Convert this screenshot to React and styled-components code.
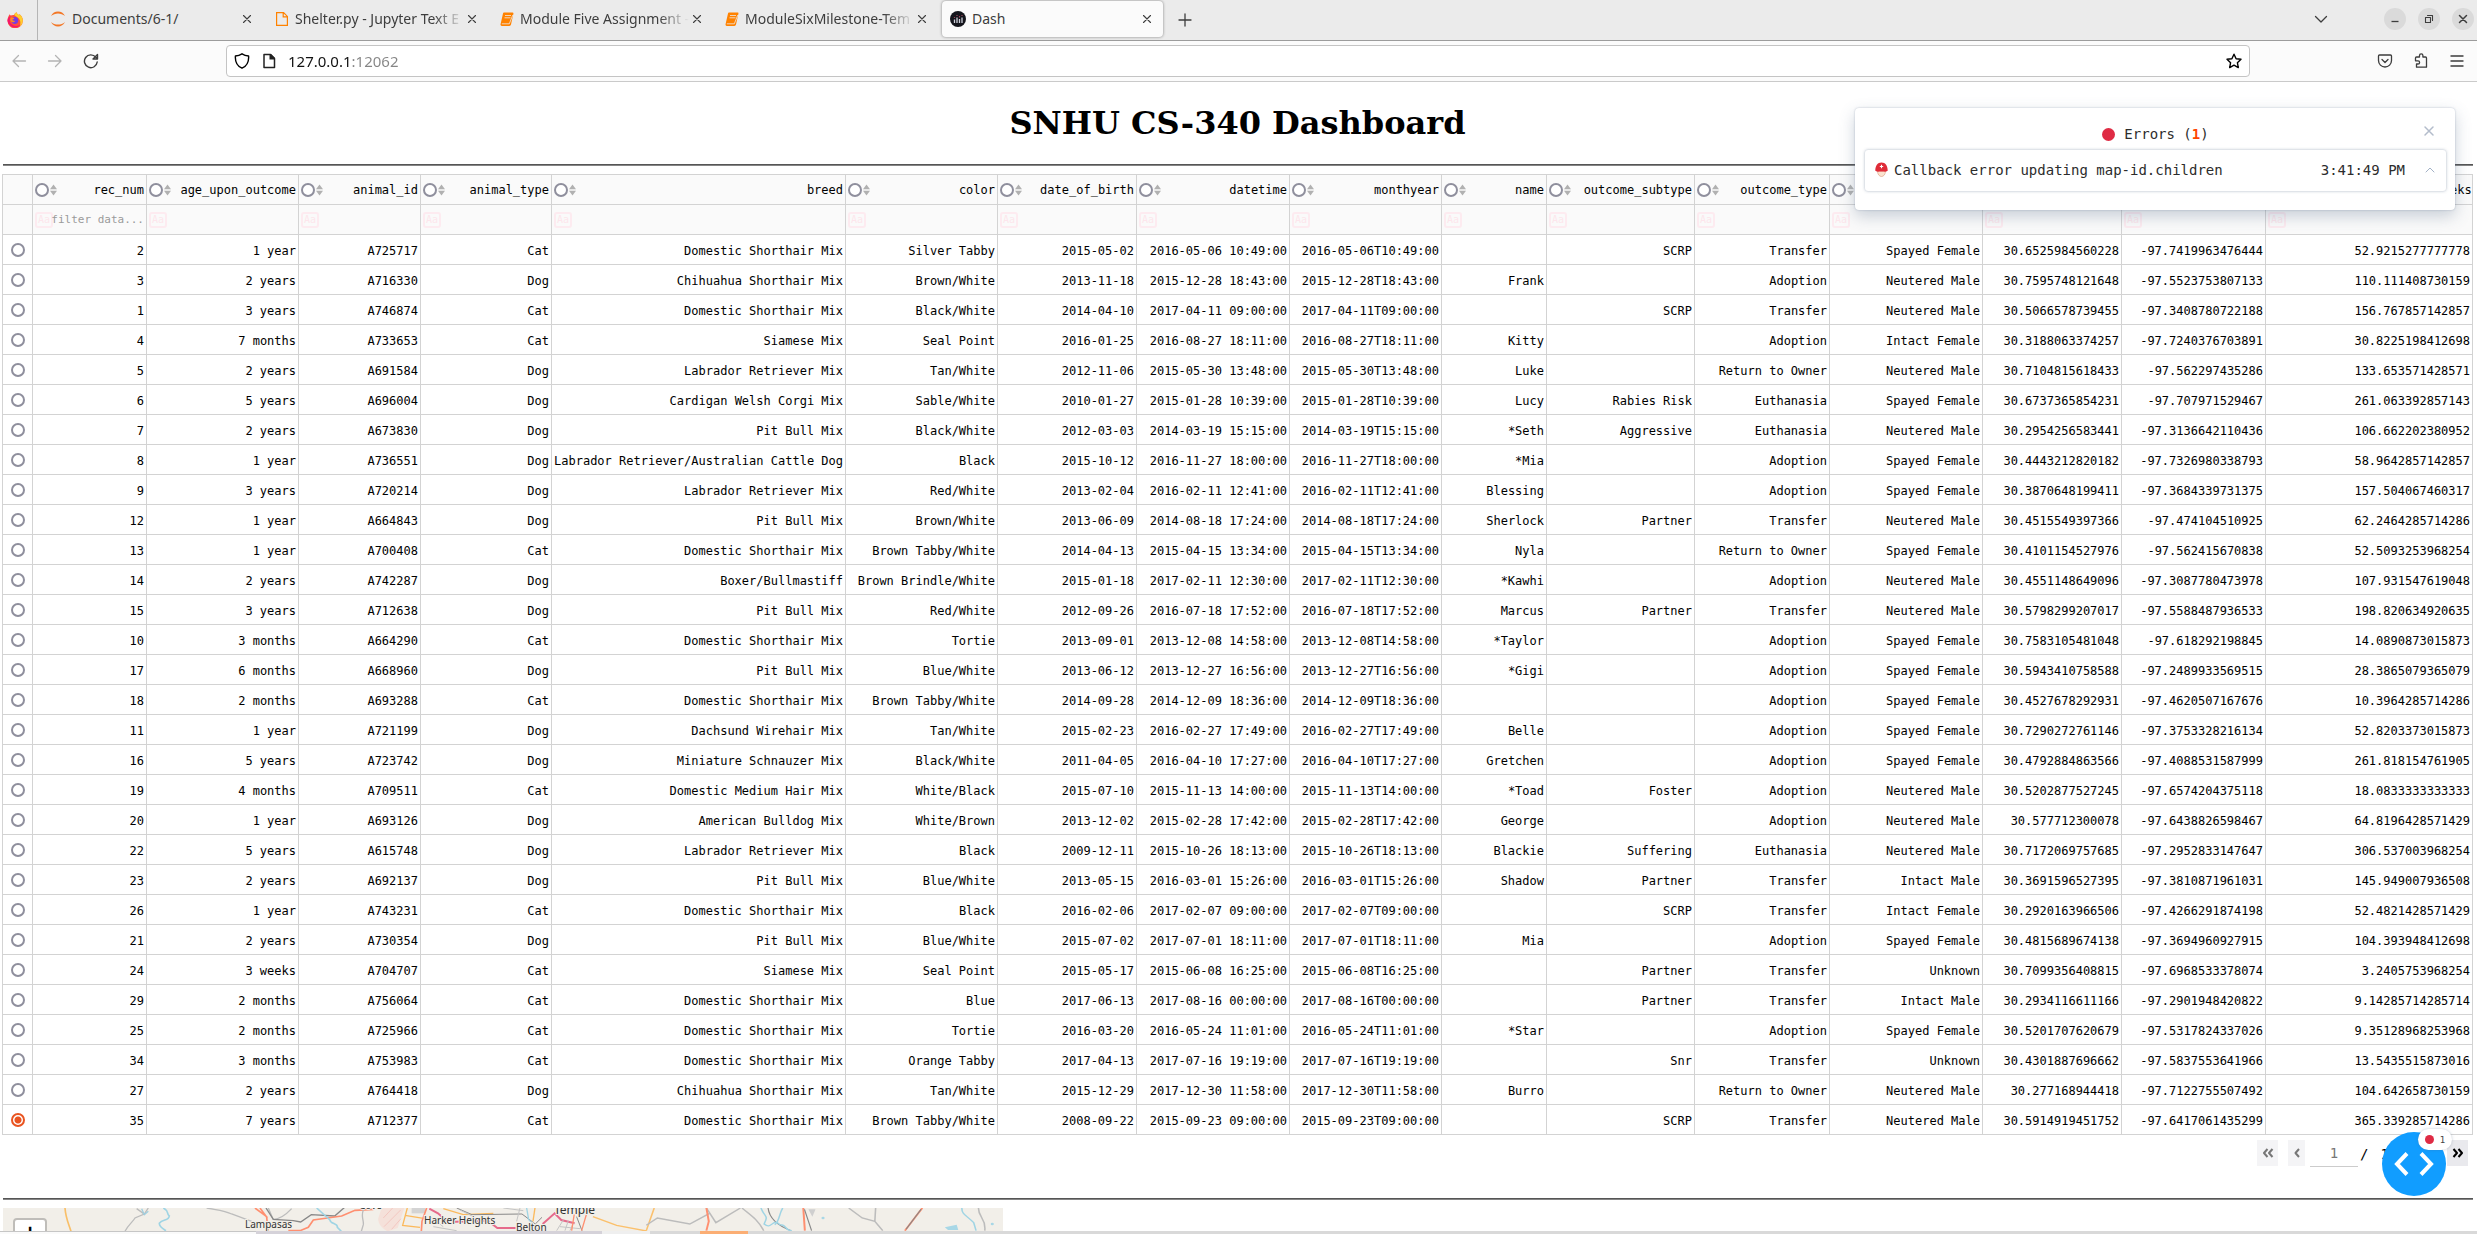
import React, { useState } from "react";
import styled, { createGlobalStyle } from "styled-components";

const UI_FONT = '"Noto Sans", "Open Sans", sans-serif';
const MONO = '"DejaVu Sans Mono", monospace';

const GlobalStyle = createGlobalStyle`
  * { box-sizing: border-box; }
  body { margin: 0; background: #fff; }
  button { border: 0; padding: 0; background: none; font: inherit; color: inherit; cursor: pointer; }
  svg { display: block; flex: none; }
`;

const Window = styled.div`
  display: flex;
  flex-direction: column;
  height: 100vh;
  overflow: hidden;
`;

/* ---------- browser chrome ---------- */

const TabBar = styled.header`
  display: flex;
  flex: none;
  height: 41px;
  background: #ebebeb;
  border-bottom: 1px solid #9c9c9c;
  font: 14px/20px ${UI_FONT};
  color: #3d3d3d;
`;

const Launcher = styled.button`
  display: grid;
  place-items: center;
  width: 38px;
  padding-right: 8px;
  border-right: 1px solid #b5b5b5;
`;

const TabList = styled.nav`
  display: flex;
  align-items: flex-start;
  gap: 4px;
  padding: 1px 4px 0;
`;

const TabBox = styled.div`
  display: flex;
  align-items: center;
  width: 221px;
  height: 36px;
  padding: 0 8px;
  border-radius: 4px;
  background: ${(p) => (p.$active ? "#fbfbfb" : "transparent")};
  box-shadow: ${(p) => (p.$active ? "0 0 3px rgba(0, 0, 0, 0.45)" : "none")};
`;

const TabTitle = styled.a`
  flex: 1;
  min-width: 0;
  margin-left: 6px;
  overflow: hidden;
  white-space: nowrap;
  color: inherit;
  text-decoration: none;
  mask-image: ${(p) => (p.$fade ? "linear-gradient(90deg, #000 82%, transparent)" : "none")};
`;

const IconButton = styled.button`
  display: grid;
  place-items: center;
  width: 16px;
  height: 16px;
  color: ${(p) => p.$color || "#3d3d3d"};
`;

const NewTab = styled(IconButton)`
  align-self: center;
  margin-left: 10px;
`;

const WindowControls = styled.div`
  display: flex;
  align-items: center;
  gap: 12px;
  height: 38px;
  margin-left: auto;
  padding-right: 3px;
`;

const ListTabs = styled(IconButton)`
  margin-right: 43px;
`;

const RoundButton = styled.button`
  display: grid;
  place-items: center;
  width: 22px;
  height: 22px;
  border-radius: 50%;
  background: #dadada;
`;

const Toolbar = styled.div`
  display: flex;
  flex: none;
  align-items: center;
  height: 41px;
  padding: 0 12px 0 11px;
  background: #fbfbfb;
  border-bottom: 1px solid #cacaca;
`;

const ToolGroup = styled.div`
  display: flex;
  gap: 20px;
`;

const AddressBar = styled.label`
  display: flex;
  flex: 1;
  align-items: center;
  gap: 11px;
  height: 32px;
  margin: 0 127px;
  padding: 0 7px;
  border: 1px solid #c4c4c4;
  border-radius: 4px;
  background: #fff;
`;

const AddressInput = styled.input`
  flex: 1;
  min-width: 0;
  border: 0;
  padding: 0;
  outline: 0;
  font: 15px/24px ${UI_FONT};
  color: transparent;
  background: linear-gradient(90deg, #111 63px, #858585 63px);
  background-clip: text;
`;

/* ---------- page ---------- */

const Page = styled.main`
  position: relative;
  flex: 1;
  min-height: 0;
  overflow: hidden;
  padding: 0 4px 0 2px;
`;

const Title = styled.h1`
  margin: 22px 0;
  text-align: center;
  font: bold 32px/38px "DejaVu Serif", serif;
  color: #000;
`;

const Rule = styled.hr`
  height: 2px;
  margin: 0 0 8px 1px;
  border: 0;
  border-top: 1px solid #555;
  background: #858585;
`;

const Table = styled.table`
  width: 100%;
  table-layout: fixed;
  border-collapse: collapse;
  font: 12px/16px ${MONO};
  color: #000;
`;

const Cell = styled.td`
  height: 30px;
  padding: 2px 2px 0;
  border: 1px solid #d3d3d3;
  text-align: right;
  white-space: nowrap;
`;

const HeadCell = styled(Cell)`
  padding-top: 0;
  background: #fafafa;
  font-weight: normal;
`;

const SelectCell = styled(Cell)`
  padding: 0;
`;

const HeadRow = styled.div`
  display: flex;
  align-items: center;
  gap: 1px;
`;

const HeadLabel = styled.label`
  flex: 1;
  padding-top: 1px;
`;

const Radio = styled.input`
  appearance: none;
  display: block;
  flex: none;
  width: 14px;
  height: 14px;
  margin: 0 ${(p) => (p.$centered ? "auto" : 0)};
  border: 2px solid #8f8f9d;
  border-radius: 50%;
  background: #fff;
  &:checked {
    border-color: #e95420;
    background: radial-gradient(circle, #e95420 3px, #fff 4px);
  }
`;

const FilterRow = styled.div`
  display: flex;
  align-items: center;
`;

const CaseButton = styled.button`
  flex: none;
  width: 18px;
  height: 16px;
  border: 2px solid #fdebf0;
  border-radius: 3px;
  font: 10px/12px ${MONO};
  color: #fde6ec;
`;

const FilterInput = styled.input`
  flex: 1;
  width: 0;
  min-width: 0;
  margin-left: -2px;
  border: 0;
  padding: 0;
  outline: 0;
  background: none;
  text-align: right;
  font: 11px/16px ${MONO};
  color: #000;
  &::placeholder { color: #9b9b9b; opacity: 1; }
`;

const Pager = styled.div`
  display: flex;
  align-items: flex-start;
  justify-content: flex-end;
  height: 63px;
  padding: 5px 5px 0 0;
  font: 14px/26px ${MONO};
`;

const PageButton = styled.button`
  display: grid;
  place-items: center;
  width: ${(p) => (p.$narrow ? 17 : 21)}px;
  height: 26px;
  margin-left: ${(p) => p.$gap || 0}px;
  background: ${(p) => (p.$off ? "#f4f4f6" : "#e9e9ed")};
  color: ${(p) => (p.$off ? "#777" : "#000")};
`;

const PageInput = styled.input`
  width: 48px;
  height: 27px;
  margin: 0 2px 0 5px;
  padding: 0;
  border: 0;
  border-bottom: 1px solid #ccc;
  outline: 0;
  text-align: center;
  font: 14px/26px ${MONO};
  background: none;
  &::placeholder { color: #777; opacity: 1; }
`;

const PageCount = styled.span`
  display: flex;
  gap: 12px;
  width: 87px;
  padding-top: 1px;
`;

const MapBox = styled.section`
  position: relative;
  width: 1000px;
  height: 500px;
  margin-left: 1px;
  background: #f2efe9;
`;

const ZoomIn = styled.button`
  position: absolute;
  top: 10px;
  left: 10px;
  width: 34px;
  height: 34px;
  border: 2px solid #bfbdb9;
  border-radius: 4px;
  background: #fff;
  font: bold 22px/30px "Liberation Mono", monospace;
`;

/* ---------- overlays ---------- */

const ErrorCard = styled.aside`
  position: absolute;
  top: 26px;
  right: 22px;
  width: 600px;
  height: 102px;
  padding: 16px 9px 0 10px;
  border-radius: 4px;
  background: #fff;
  box-shadow: 0 0 2px rgba(80, 103, 132, 0.4), 0 6px 16px rgba(80, 103, 132, 0.3);
  font: 14px/20px ${MONO};
  color: #2c2c2c;
`;

const ErrorHead = styled.div`
  display: flex;
  align-items: center;
  justify-content: center;
  gap: 9px;
  height: 20px;
  margin-bottom: 6px;
  b { color: #ff4500; }
`;

const Dot = styled.span`
  width: ${(p) => p.$size}px;
  height: ${(p) => p.$size}px;
  border-radius: 50%;
  background: #df2b44;
`;

const CloseCard = styled(IconButton)`
  position: absolute;
  top: 15px;
  right: 18px;
`;

const ErrorItem = styled.button`
  display: flex;
  align-items: center;
  width: 100%;
  height: 41px;
  padding: 0 8px 2px 10px;
  border-radius: 3px;
  box-shadow: 0 0 3px rgba(80, 103, 132, 0.5);
`;

const ErrorText = styled.span`
  flex: 1;
  margin-left: 6px;
  text-align: left;
`;

const ErrorTime = styled.time`
  margin-right: 17px;
`;

const DevMenu = styled.button`
  position: absolute;
  right: 31px;
  bottom: 35px;
  display: grid;
  place-items: center;
  width: 64px;
  height: 64px;
  border-radius: 50%;
  background: #119dff;
`;

const DevBadge = styled.span`
  position: absolute;
  top: -3px;
  right: -6px;
  display: flex;
  align-items: center;
  justify-content: center;
  gap: 6px;
  width: 34px;
  height: 21px;
  border-radius: 11px;
  background: #fff;
  box-shadow: 0 0 3px rgba(80, 103, 132, 0.35);
  font: 9px/12px ${MONO};
  color: #444;
`;

const Dock = styled.footer`
  display: flex;
  flex: none;
  height: 3px;
  background: #d9d9d9;
`;

const DockItem = styled.span`
  width: ${(p) => p.$width}px;
  background: ${(p) => p.$color};
  border-top: ${(p) => (p.$line ? "1px solid #c6c6c6" : "0")};
`;

/* ---------- icons ---------- */

const Stroke = ({ size = 16, width = 1.3, d, box = "0 0 16 16", cap = "round" }) => (
  <svg width={size} height={size} viewBox={box} fill="none" stroke="currentColor" strokeWidth={width} strokeLinecap={cap} strokeLinejoin="round">
    <path d={d} />
  </svg>
);

const CloseIcon = () => <Stroke d="M4.500 4.500l7 7M11.500 4.500l-7 7" width={1.1} />;

const FirefoxIcon = () => (
  <svg width="16" height="16" viewBox="0 0 16 16">
    <path d="M1.500 4.200C2 3.300 2.400 2.600 2.800 2.200c.1.700.4 1.100.8 1.400C4.800 3 6 2.700 7.200 3 7.500 1.700 8.600.6 9.600.2c.2 1.300 1.200 2.100 2.600 3.100.1-.4.1-.9 0-1.300 2.200 1.500 3.600 3.900 3.600 6.500A7.600 7.600 0 0 1 .5 8.800c-.1-1.700.3-3.300 1-4.600z" fill="#ff4f3a" />
    <path d="M7.200 3C7.500 1.700 8.600.6 9.600.2c.2 1.300 1.200 2.100 2.600 3.100.1-.4.1-.9 0-1.300 2.200 1.500 3.600 3.900 3.600 6.500 0 2.500-1.200 4.700-3.200 6.100 1.500-3.300 1-7.100-2-9.100-1.100-.8-2.300-1.500-3.400-2.500z" fill="#ffcf2e" />
    <path d="M.5 8.800c.6 4 4 6.500 7.500 6.800 2.500 0 4.500-1 5.500-3-2.500 2-7.500 2-10-1.500C2.500 9.500 2.500 6 3.600 3.600 2.200 5 .6 6.500.5 8.800z" fill="#f5156c" />
    <circle cx="7.800" cy="8.500" r="3.400" fill="#7a3be0" />
    <path d="M3.800 5.800c1.200-.5 2.600-.3 3.600.7-.9.6-1.900.8-2.100 1.600.6.9 2 .5 2.700 1.200-.8 1.200-2.800 1.100-4 .1-.8-1-.8-2.500-.2-3.600z" fill="#ff8a1e" />
  </svg>
);

const JupyterIcon = () => (
  <svg width="16" height="16" viewBox="0 0 16 16" fill="#f37726">
    <path d="M1 5C2.500 2 5 .6 8 .6S13.500 2 15 5C13 3.200 10.600 2.400 8 2.400S3 3.200 1 5zM1 11c1.500 3 4 4.400 7 4.400s5.500-1.400 7-4.400c-2 1.800-4.400 2.600-7 2.600S3 12.800 1 11z" />
  </svg>
);

const FileIcon = () => (
  <svg width="14" height="16" viewBox="0 0 14 16" fill="none" stroke="#ff8200" strokeWidth="1.200">
    <path d="M1.600 1.600h7l3.800 3.800v9H1.600zM8.200 1.800v4h4" />
  </svg>
);

const BookIcon = () => (
  <svg width="14" height="16" viewBox="0 0 14 16">
    <path d="M4 1.500h8.500c.8 0 1.100.5.9 1.200L11 13.500c-.2.900-.8 1.400-1.700 1.400H1.800C.8 14.900.3 14 .6 13L3 2.500c.1-.6.4-1 1-1z" fill="#ff8200" />
    <path d="M5 4.500h6M4.500 6.800h6M1.800 12.800h7.500L12.800 4" fill="none" stroke="#ebebeb" strokeWidth=".8" />
  </svg>
);

const DashIcon = () => (
  <svg width="16" height="16" viewBox="0 0 16 16">
    <circle cx="8" cy="8" r="8" fill="#14151c" />
    <path d="M4.500 8.500V12M7 6.500V12M9.500 8V12M12 6.500V12" stroke="#cfd2dc" strokeWidth="1.300" />
    <path d="M4.500 6v1M7 4v1M9.500 5v1.500M12 4v1" stroke="#9c4358" strokeWidth="1.200" />
  </svg>
);

const SortIcon = () => (
  <svg width="7" height="12" viewBox="0 0 7 12" fill="#b1b1b1">
    <path d="M3.500.5L7 5.300H0zM3.500 11.500L0 6.700h7z" />
  </svg>
);

const HelmetIcon = () => (
  <svg width="13" height="15" viewBox="0 0 13 15">
    <path d="M2.500 9h8c0 3.500-2 5.500-4 5.500s-4-2-4-5.500z" fill="#fbe3cf" stroke="#d99a7d" strokeWidth=".6" />
    <path d="M.3 8.800C.3 4 2.500.5 6.500.5s6.200 3.500 6.200 8.300c-1.500.9-3 1-4.200.7h-4c-1.200.3-2.700.2-4.200-.7z" fill="#df2b38" />
    <path d="M6.500 2.800v3.400M4.800 4.500h3.400" stroke="#fff" strokeWidth="1.100" />
  </svg>
);

const MapLines = () => (
  <svg width="1000" height="24" viewBox="0 0 1000 24" fill="none">
    <g transform="translate(-3 -18) scale(.3333)" strokeWidth="4">
      <path d="M195 54c2 30 10 45 18 70" stroke="#f9bf68" strokeWidth="5" />
      <path d="M375 124c10-20 25-30 30-40l28-12 12-18M410 56l20 14" stroke="#bcbcbc" />
      <path d="M425 56l8 18 12-10" stroke="#9fcfe0" />
      <path d="M490 54c20 10 8 18 18 24-2 16-20 8-30 22 0 12 14 18 20 22" stroke="#9fd4e4" strokeWidth="5" />
      <path d="M620 54c30 6 55 8 75 18l60 22" stroke="#bcbcbc" />
      <path d="M765 54l35 26 4 42M780 54l22 30" stroke="#ff8f70" strokeWidth="5" />
      <path d="M805 54l15 35M820 88c20 0 40-16 55-32" stroke="#bcbcbc" />
    </g>
    <g transform="translate(227 -18) scale(.3333)" strokeWidth="4">
      <path d="M108 54l22 34 60 4 22 4 32-22 70 4 30-26" stroke="#888" />
      <path d="M175 122h35l25-10 15-22 85-12 40-17 55-3" stroke="#ff8f70" strokeWidth="5" />
      <path d="M260 54l20 18 20 18c0 12 25 10 22 22l12 12" stroke="#9fd4e4" strokeWidth="5" />
      <path d="M400 60c-8 20 2 30 0 44l-6 20" stroke="#bcbcbc" />
      <path d="M455 54h68l-20 60-30 10c-20-10-30-26-28-40z" fill="#f5e1da" />
      <path d="M460 84l28-30M462 110l50-50M485 118l28-32" stroke="#f2bab4" strokeWidth="2" />
      <path d="M545 54h40v16h-40z" fill="#d4d4d4" />
      <path d="M532 54l-14 52 52 6M525 76l60 10M640 56l60 18 90-4" stroke="#fbb95c" strokeWidth="4" />
      <path d="M590 54l-14 40-2 30" stroke="#ff8f70" strokeWidth="5" />
      <path d="M598 56l26 14 30 26 120-4 28 22h55M938 102l36-32 20 20 40 10" stroke="#e66a8b" strokeWidth="6" />
      <path d="M680 54l46 20 150-2 40 30 20-20M1040 80l16 42" stroke="#888" strokeWidth="3" />
      <path d="M600 80l40 30M610 110l70 12M690 60l40 20M820 54l60 8M870 54l-10 40M1000 90l-20 32M1015 92l-10 30M990 110l60 6M1030 100l-10 22" stroke="#c4c4c4" strokeWidth="3" />
      <path d="M915 54l-6 40" stroke="#fbb95c" />
      <path d="M890 54l6 34 30 34" stroke="#9fd4e4" />
      <path d="M1075 54l-20 68M1025 122l8-50" stroke="#ff8f70" />
    </g>
    <g transform="translate(497 -28) scale(.3954 .3333)" strokeWidth="4">
      <path d="M235 110l60 26 75 17M390 84l-20 68" stroke="#fbc06c" strokeWidth="4" />
      <path d="M370 136l28-22 82 18 50-32M522 84l24 44 62-44M612 84c20 20 40 34 55 68M882 84l34 30 32 10 20 28M948 124l2-40M1210 84c0 30 20 30 16 68" stroke="#bcbcbc" />
      <path d="M522 84l6 40-6 28M767 84l4 68M1068 84l-44 68" stroke="#ff8f70" strokeWidth="5" />
      <path d="M678 84c4 40 40 60 58 68M770 88l18 64M1065 88l-38 60" stroke="#888" strokeWidth="3" />
      <path d="M660 84c10 30 20 20 8 48 20 20 20-20 40 2 20 0 10 18 30 18M715 84c-10 20-8 40-20 50M1168 84c0 20 10 20 30 44l6 24" stroke="#9fd4e4" strokeWidth="4" />
      <path d="M780 88h18l-8 22z" fill="#cfcfcf" />
      <path d="M1125 142l30-8 4 16h-26z" fill="#a8d7e6" />
      <circle cx="817" cy="114" r="4" fill="#a8d7e6" />
      <circle cx="1245" cy="132" r="4" fill="#a8d7e6" />
    </g>
    <g fill="#333" stroke="#f2efe9" strokeWidth="2" paintOrder="stroke" fontFamily='"Noto Sans", sans-serif' fontSize="10">
      <text x="242" y="20">Lampasas</text>
      <text x="421" y="16">Harker Heights</text>
      <text x="513" y="23">Belton</text>
      <text x="356" y="1">Cove</text>
      <text x="551" y="6" fontSize="12">Temple</text>
    </g>
  </svg>
);

/* ---------- data ---------- */

const TABS = [
  { title: "Documents/6-1/", icon: <JupyterIcon /> },
  { title: "Shelter.py - Jupyter Text E", icon: <FileIcon />, fade: true },
  { title: "Module Five Assignment -", icon: <BookIcon />, fade: true },
  { title: "ModuleSixMilestone-Tem", icon: <BookIcon />, fade: true },
  { title: "Dash", icon: <DashIcon />, active: true },
];

const COLUMNS = [
  ["rec_num", 114],
  ["age_upon_outcome", 152],
  ["animal_id", 122],
  ["animal_type", 131],
  ["breed", 294],
  ["color", 152],
  ["date_of_birth", 139],
  ["datetime", 153],
  ["monthyear", 152],
  ["name", 105],
  ["outcome_subtype", 148],
  ["outcome_type", 135],
  ["sex_upon_outcome", 153],
  ["location_lat", 139],
  ["location_long", 144],
  ["age_upon_outcome_in_weeks", null],
];

// rec | age | id | type | breed | colour | born | outcome time | name | subtype | outcome | sex | lat | long | weeks
const RECORDS = `
2|1 year|A725717|Cat|Domestic Shorthair Mix|Silver Tabby|2015-05-02|2016-05-06 10:49:00||SCRP|Transfer|Spayed Female|30.6525984560228|-97.7419963476444|52.9215277777778
3|2 years|A716330|Dog|Chihuahua Shorthair Mix|Brown/White|2013-11-18|2015-12-28 18:43:00|Frank||Adoption|Neutered Male|30.7595748121648|-97.5523753807133|110.111408730159
1|3 years|A746874|Cat|Domestic Shorthair Mix|Black/White|2014-04-10|2017-04-11 09:00:00||SCRP|Transfer|Neutered Male|30.5066578739455|-97.3408780722188|156.767857142857
4|7 months|A733653|Cat|Siamese Mix|Seal Point|2016-01-25|2016-08-27 18:11:00|Kitty||Adoption|Intact Female|30.3188063374257|-97.7240376703891|30.8225198412698
5|2 years|A691584|Dog|Labrador Retriever Mix|Tan/White|2012-11-06|2015-05-30 13:48:00|Luke||Return to Owner|Neutered Male|30.7104815618433|-97.562297435286|133.653571428571
6|5 years|A696004|Dog|Cardigan Welsh Corgi Mix|Sable/White|2010-01-27|2015-01-28 10:39:00|Lucy|Rabies Risk|Euthanasia|Spayed Female|30.6737365854231|-97.707971529467|261.063392857143
7|2 years|A673830|Dog|Pit Bull Mix|Black/White|2012-03-03|2014-03-19 15:15:00|*Seth|Aggressive|Euthanasia|Neutered Male|30.2954256583441|-97.3136642110436|106.662202380952
8|1 year|A736551|Dog|Labrador Retriever/Australian Cattle Dog|Black|2015-10-12|2016-11-27 18:00:00|*Mia||Adoption|Spayed Female|30.4443212820182|-97.7326980338793|58.9642857142857
9|3 years|A720214|Dog|Labrador Retriever Mix|Red/White|2013-02-04|2016-02-11 12:41:00|Blessing||Adoption|Spayed Female|30.3870648199411|-97.3684339731375|157.504067460317
12|1 year|A664843|Dog|Pit Bull Mix|Brown/White|2013-06-09|2014-08-18 17:24:00|Sherlock|Partner|Transfer|Neutered Male|30.4515549397366|-97.474104510925|62.2464285714286
13|1 year|A700408|Cat|Domestic Shorthair Mix|Brown Tabby/White|2014-04-13|2015-04-15 13:34:00|Nyla||Return to Owner|Spayed Female|30.4101154527976|-97.562415670838|52.5093253968254
14|2 years|A742287|Dog|Boxer/Bullmastiff|Brown Brindle/White|2015-01-18|2017-02-11 12:30:00|*Kawhi||Adoption|Neutered Male|30.4551148649096|-97.3087780473978|107.931547619048
15|3 years|A712638|Dog|Pit Bull Mix|Red/White|2012-09-26|2016-07-18 17:52:00|Marcus|Partner|Transfer|Neutered Male|30.5798299207017|-97.5588487936533|198.820634920635
10|3 months|A664290|Cat|Domestic Shorthair Mix|Tortie|2013-09-01|2013-12-08 14:58:00|*Taylor||Adoption|Spayed Female|30.7583105481048|-97.618292198845|14.0890873015873
17|6 months|A668960|Dog|Pit Bull Mix|Blue/White|2013-06-12|2013-12-27 16:56:00|*Gigi||Adoption|Spayed Female|30.5943410758588|-97.2489933569515|28.3865079365079
18|2 months|A693288|Cat|Domestic Shorthair Mix|Brown Tabby/White|2014-09-28|2014-12-09 18:36:00|||Adoption|Spayed Female|30.4527678292931|-97.4620507167676|10.3964285714286
11|1 year|A721199|Dog|Dachsund Wirehair Mix|Tan/White|2015-02-23|2016-02-27 17:49:00|Belle||Adoption|Spayed Female|30.7290272761146|-97.3753328216134|52.8203373015873
16|5 years|A723742|Dog|Miniature Schnauzer Mix|Black/White|2011-04-05|2016-04-10 17:27:00|Gretchen||Adoption|Spayed Female|30.4792884863566|-97.4088531587999|261.818154761905
19|4 months|A709511|Cat|Domestic Medium Hair Mix|White/Black|2015-07-10|2015-11-13 14:00:00|*Toad|Foster|Adoption|Neutered Male|30.5202877527245|-97.6574204375118|18.0833333333333
20|1 year|A693126|Dog|American Bulldog Mix|White/Brown|2013-12-02|2015-02-28 17:42:00|George||Adoption|Neutered Male|30.577712300078|-97.6438826598467|64.8196428571429
22|5 years|A615748|Dog|Labrador Retriever Mix|Black|2009-12-11|2015-10-26 18:13:00|Blackie|Suffering|Euthanasia|Neutered Male|30.7172069757685|-97.2952833147647|306.537003968254
23|2 years|A692137|Dog|Pit Bull Mix|Blue/White|2013-05-15|2016-03-01 15:26:00|Shadow|Partner|Transfer|Intact Male|30.3691596527395|-97.3810871961031|145.949007936508
26|1 year|A743231|Cat|Domestic Shorthair Mix|Black|2016-02-06|2017-02-07 09:00:00||SCRP|Transfer|Intact Female|30.2920163966506|-97.4266291874198|52.4821428571429
21|2 years|A730354|Dog|Pit Bull Mix|Blue/White|2015-07-02|2017-07-01 18:11:00|Mia||Adoption|Spayed Female|30.4815689674138|-97.3694960927915|104.393948412698
24|3 weeks|A704707|Cat|Siamese Mix|Seal Point|2015-05-17|2015-06-08 16:25:00||Partner|Transfer|Unknown|30.7099356408815|-97.6968533378074|3.2405753968254
29|2 months|A756064|Cat|Domestic Shorthair Mix|Blue|2017-06-13|2017-08-16 00:00:00||Partner|Transfer|Intact Male|30.2934116611166|-97.2901948420822|9.14285714285714
25|2 months|A725966|Cat|Domestic Shorthair Mix|Tortie|2016-03-20|2016-05-24 11:01:00|*Star||Adoption|Spayed Female|30.5201707620679|-97.5317824337026|9.35128968253968
34|3 months|A753983|Cat|Domestic Shorthair Mix|Orange Tabby|2017-04-13|2017-07-16 19:19:00||Snr|Transfer|Unknown|30.4301887696662|-97.5837553641966|13.5435515873016
27|2 years|A764418|Dog|Chihuahua Shorthair Mix|Tan/White|2015-12-29|2017-12-30 11:58:00|Burro||Return to Owner|Neutered Male|30.277168944418|-97.7122755507492|104.642658730159
35|7 years|A712377|Cat|Domestic Shorthair Mix|Brown Tabby/White|2008-09-22|2015-09-23 09:00:00||SCRP|Transfer|Neutered Male|30.5914919451752|-97.6417061435299|365.339285714286
`
  .trim()
  .split("\n")
  .map((line) => {
    const cells = line.split("|");
    cells.splice(8, 0, cells[7].replace(" ", "T"));
    return cells;
  });

/* ---------- components ---------- */

const Tab = ({ title, icon, active, fade }) => (
  <TabBox $active={active}>
    {icon}
    <TabTitle href="#" $fade={fade}>{title}</TabTitle>
    <IconButton aria-label={`Close ${title}`}><CloseIcon /></IconButton>
  </TabBox>
);

const BrowserChrome = () => (
  <>
    <TabBar>
      <Launcher aria-label="Firefox"><FirefoxIcon /></Launcher>
      <TabList>{TABS.map((tab) => <Tab key={tab.title} {...tab} />)}</TabList>
      <NewTab aria-label="New tab"><Stroke d="M8 2v12M2 8h12" /></NewTab>
      <WindowControls>
        <ListTabs aria-label="List all tabs"><Stroke d="M2.500 5.500L8 11l5.500-5.500" /></ListTabs>
        <RoundButton aria-label="Minimize"><Stroke d="M4.500 10.500h7" cap="butt" /></RoundButton>
        <RoundButton aria-label="Restore"><Stroke d="M4.500 6.500h5v5h-5zM6.500 4.500h5v5" width={1.1} /></RoundButton>
        <RoundButton aria-label="Close window"><Stroke d="M4.500 4.500l7 7M11.500 4.500l-7 7" width={1.5} /></RoundButton>
      </WindowControls>
    </TabBar>
    <Toolbar>
      <ToolGroup>
        <IconButton aria-label="Back" $color="#b4b4b4"><Stroke d="M14.500 8H2M7.500 2.500L2 8l5.500 5.500" /></IconButton>
        <IconButton aria-label="Forward" $color="#b4b4b4"><Stroke d="M1.500 8H14M8.500 2.500L14 8l-5.500 5.500" /></IconButton>
        <IconButton aria-label="Reload"><Stroke d="M14.200 9A6.400 6.400 0 1 1 12.800 4.200L14 5.500M14.500 1.500v4.500H10z" width={1.4} /></IconButton>
      </ToolGroup>
      <AddressBar>
        <Stroke d="M8 .8c2 1.300 4.200 2 6.600 2.200.4 5.600-1.600 9.900-6.600 12.200C3 12.900 1 8.600 1.400 3 3.800 2.800 6 2.100 8 .8z" width={1.4} />
        <svg width="16" height="16" viewBox="0 0 16 16">
          <path d="M3 1.500h6.500l4 4v9H3z" fill="none" stroke="#222" strokeWidth="1.500" strokeLinejoin="round" />
          <path d="M8.500 1h1.500l4 4v1.500H8.500z" fill="#222" />
        </svg>
        <AddressInput aria-label="Address" defaultValue="127.0.0.1:12062" />
        <Stroke d="M8 1.200l2.100 4.500 4.900.6-3.600 3.400.9 4.900L8 12.200l-4.300 2.400.9-4.900L1 6.300l4.900-.6z" width={1.4} />
      </AddressBar>
      <ToolGroup>
        <IconButton aria-label="Pocket"><Stroke d="M2.500 2h11c.7 0 1 .4 1 1v4.500a6.500 6.500 0 0 1-13 0V3c0-.6.3-1 1-1zM5 6.500l3 3 3-3" /></IconButton>
        <IconButton aria-label="Extensions"><Stroke d="M6.500 4V2.500a1.700 1.700 0 0 1 3.400 0V4h2.600c.6 0 1 .4 1 1v9.200H3.500V11H5a1.500 1.500 0 0 0 0-3.200H2.500V5c0-.6.4-1 1-1z" /></IconButton>
        <IconButton aria-label="Menu"><Stroke d="M2 3h12M2 8h12M2 13h12" width={1.4} /></IconButton>
      </ToolGroup>
    </Toolbar>
  </>
);

const DataTable = () => {
  const [selected, setSelected] = useState("35");
  return (
    <Table>
      <colgroup>
        <col width={30} />
        {COLUMNS.map(([name, width]) => <col key={name} width={width ?? undefined} />)}
      </colgroup>
      <thead>
        <tr>
          <HeadCell />
          {COLUMNS.map(([name]) => (
            <HeadCell as="th" key={name}>
              <HeadRow>
                <Radio type="radio" name="column" id={`col-${name}`} />
                <SortIcon />
                <HeadLabel htmlFor={`col-${name}`}>{name}</HeadLabel>
              </HeadRow>
            </HeadCell>
          ))}
        </tr>
        <tr>
          <HeadCell />
          {COLUMNS.map(([name], i) => (
            <HeadCell key={name}>
              <FilterRow>
                <CaseButton aria-label={`Match case in ${name}`}>Aa</CaseButton>
                <FilterInput aria-label={`Filter ${name}`} placeholder={i === 0 ? "filter data..." : undefined} />
              </FilterRow>
            </HeadCell>
          ))}
        </tr>
      </thead>
      <tbody>
        {RECORDS.map((cells) => (
          <tr key={cells[0]}>
            <SelectCell>
              <Radio
                $centered
                type="radio"
                name="record"
                aria-label={`Select record ${cells[0]}`}
                checked={selected === cells[0]}
                onChange={() => setSelected(cells[0])}
              />
            </SelectCell>
            {cells.map((value, i) => <Cell key={i}>{value}</Cell>)}
          </tr>
        ))}
      </tbody>
    </Table>
  );
};

export default function App() {
  return (
    <Window>
      <GlobalStyle />
      <BrowserChrome />
      <Page>
        <Title>SNHU CS-340 Dashboard</Title>
        <Rule />
        <DataTable />
        <Pager>
          <PageButton $off aria-label="First page"><Stroke size={12} box="0 0 12 12" width={2} cap="butt" d="M5.500 2L2 6l3.500 4M10.500 2L7 6l3.500 4" /></PageButton>
          <PageButton $off $narrow $gap={10} aria-label="Previous page"><Stroke size={12} box="0 0 12 12" width={2} cap="butt" d="M8 2L4.500 6 8 10" /></PageButton>
          <PageInput aria-label="Page number" placeholder="1" />
          <PageCount><span>/</span><span>1000</span></PageCount>
          <PageButton aria-label="Last page"><Stroke size={12} box="0 0 12 12" width={2} cap="butt" d="M1.500 2L5 6l-3.500 4M6.500 2L10 6l-3.500 4" /></PageButton>
        </Pager>
        <Rule />
        <MapBox aria-label="Map">
          <MapLines />
          <ZoomIn aria-label="Zoom in">+</ZoomIn>
        </MapBox>
        <ErrorCard>
          <ErrorHead>
            <Dot $size={13} />
            <span>Errors (<b>1</b>)</span>
          </ErrorHead>
          <CloseCard aria-label="Dismiss" $color="#b3bccb"><Stroke d="M4 4l8 8M12 4l-8 8" width={1.5} /></CloseCard>
          <ErrorItem>
            <HelmetIcon />
            <ErrorText>Callback error updating map-id.children</ErrorText>
            <ErrorTime>3:41:49 PM</ErrorTime>
            <IconButton as="span" $color="#a2b1c6"><Stroke d="M4 10l4-4 4 4" width={1} /></IconButton>
          </ErrorItem>
        </ErrorCard>
        <DevMenu aria-label="Developer tools">
          <svg width="42" height="24" viewBox="0 0 42 24" fill="none" stroke="#fff" strokeWidth="4">
            <path d="M14 1.500L4 12l10 10.500M28 1.500L38 12 28 22.500" />
          </svg>
          <DevBadge><Dot $size={9} />1</DevBadge>
        </DevMenu>
      </Page>
      <Dock>
        <DockItem $width={256} $color="#fafafa" $line />
        <DockItem $width={346} $color="#d5d2d9" />
        <DockItem $width={48} $color="#efefef" />
        <DockItem $width={50} $color="#d9d9d9" />
        <DockItem $width={48} $color="#fbae74" />
      </Dock>
    </Window>
  );
}
